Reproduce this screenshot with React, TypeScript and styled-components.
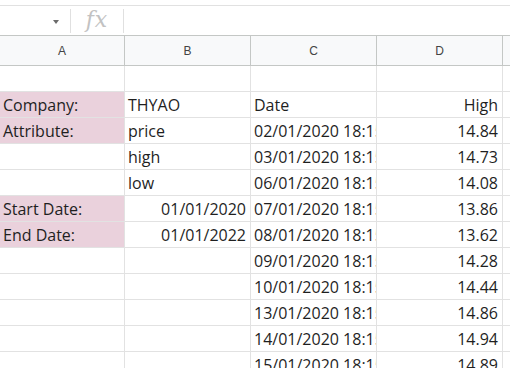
import React from "react";
import styled, { createGlobalStyle } from "styled-components";

const GlobalStyle = createGlobalStyle`
  html, body {
    margin: 0;
    padding: 0;
    background: #fff;
    overflow: hidden;
  }
`;

type Cell = { text?: string; right?: boolean; pink?: boolean };

const columns = ["A", "B", "C", "D", ""];
const widths = [125, 126, 126, 126, 40];

const rows: Cell[][] = [
  [{}, {}, {}, {}, {}],
  [{ text: "Company:", pink: true }, { text: "THYAO" }, { text: "Date" }, { text: "High", right: true }, {}],
  [{ text: "Attribute:", pink: true }, { text: "price" }, { text: "02/01/2020 18:15" }, { text: "14.84", right: true }, {}],
  [{}, { text: "high" }, { text: "03/01/2020 18:15" }, { text: "14.73", right: true }, {}],
  [{}, { text: "low" }, { text: "06/01/2020 18:15" }, { text: "14.08", right: true }, {}],
  [{ text: "Start Date:", pink: true }, { text: "01/01/2020", right: true }, { text: "07/01/2020 18:15" }, { text: "13.86", right: true }, {}],
  [{ text: "End Date:", pink: true }, { text: "01/01/2022", right: true }, { text: "08/01/2020 18:15" }, { text: "13.62", right: true }, {}],
  [{}, {}, { text: "09/01/2020 18:15" }, { text: "14.28", right: true }, {}],
  [{}, {}, { text: "10/01/2020 18:15" }, { text: "14.44", right: true }, {}],
  [{}, {}, { text: "13/01/2020 18:15" }, { text: "14.86", right: true }, {}],
  [{}, {}, { text: "14/01/2020 18:15" }, { text: "14.94", right: true }, {}],
  [{}, {}, { text: "15/01/2020 18:15" }, { text: "14.89", right: true }, {}],
];

function App() {
  return (
    <Page>
      <GlobalStyle />
      <FormulaBar>
        <NameBox>
          <Caret />
        </NameBox>
        <Divider />
        <Fx>fx</Fx>
        <Divider />
      </FormulaBar>
      <Sheet>
        {columns.map((c, i) => (
          <HeaderCell key={c + i}>{c}</HeaderCell>
        ))}
        {rows.map((row, r) =>
          row.map((cell, i) => (
            <DataCell key={r + "-" + i} $right={cell.right} $pink={cell.pink}>
              {cell.text}
            </DataCell>
          ))
        )}
      </Sheet>
    </Page>
  );
}

const Page = styled.div`
  width: 510px;
  height: 368px;
  overflow: hidden;
  padding-top: 5px;
  box-sizing: border-box;
  background: #fff;
`;

const FormulaBar = styled.div`
  display: flex;
  align-items: center;
  height: 29px;
  border-top: 1px solid #e1e1e1;
`;

const NameBox = styled.div`
  width: 70px;
  height: 100%;
  display: flex;
  align-items: center;
  justify-content: flex-end;
  padding-right: 11px;
  box-sizing: border-box;
`;

const Caret = styled.span`
  width: 0;
  height: 0;
  border-left: 3.5px solid transparent;
  border-right: 3.5px solid transparent;
  border-top: 4px solid #6b6b6b;
  margin-top: 2px;
`;

const Divider = styled.div`
  width: 1px;
  height: 24px;
  background: #e0e0e0;
`;

const Fx = styled.div`
  width: 52px;
  text-align: center;
  font-family: "DejaVu Serif", "Liberation Serif", serif;
  font-style: italic;
  font-size: 22px;
  color: #c2c2c2;
  line-height: 1;
  letter-spacing: 1px;
  margin-top: -2px;
`;

const Sheet = styled.div`
  display: grid;
  grid-template-columns: ${widths.map((w) => w + "px").join(" ")};
  grid-auto-rows: 26px;
  grid-template-rows: 31px;
  width: 543px;
`;

const HeaderCell = styled.div`
  box-sizing: border-box;
  background: #f8f9fa;
  border-top: 1px solid #c4c7c5;
  border-bottom: 1px solid #c4c7c5;
  border-right: 1px solid #c4c7c5;
  display: flex;
  align-items: center;
  justify-content: center;
  font-family: "Liberation Sans", Arial, sans-serif;
  font-size: 12px;
  color: #444;
`;

const DataCell = styled.div<{ $right?: boolean; $pink?: boolean }>`
  box-sizing: border-box;
  border-right: 1px solid #e2e2e2;
  border-bottom: 1px solid #e2e2e2;
  background: ${(p) => (p.$pink ? "#ead1dc" : "#fff")};
  display: flex;
  align-items: flex-end;
  justify-content: ${(p) => (p.$right ? "flex-end" : "flex-start")};
  padding: 0 4px 1px 3px;
  overflow: hidden;
  white-space: nowrap;
  font-family: "Open Sans", "Liberation Sans", sans-serif;
  font-size: 16px;
  line-height: 22px;
  color: #1f1f1f;
`;

export default App;
